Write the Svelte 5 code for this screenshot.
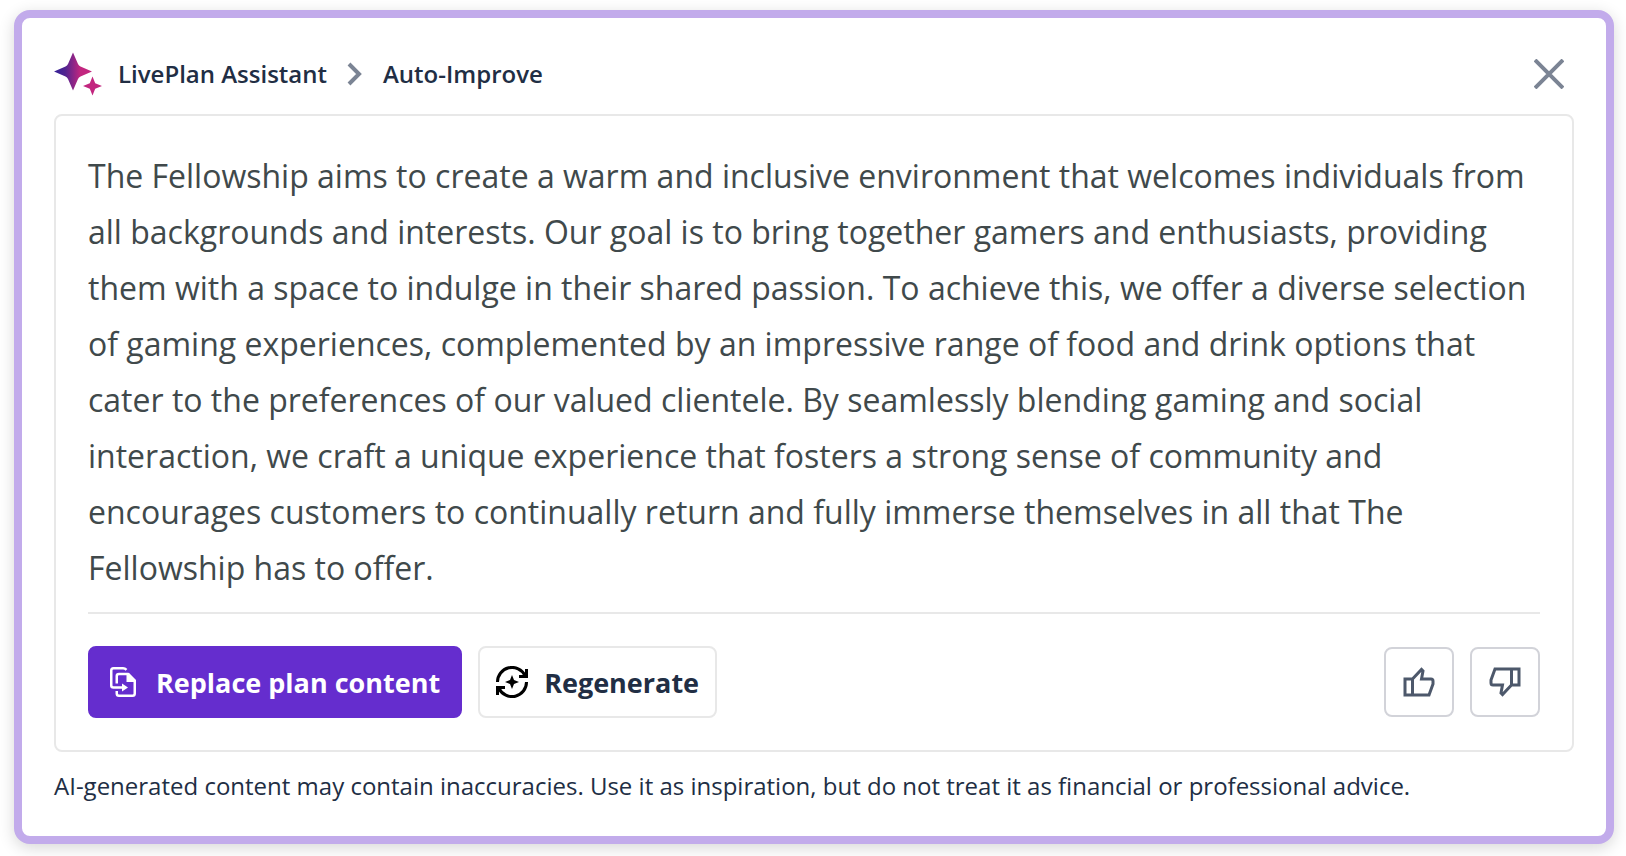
<script lang="ts">
  interface Props {
    action?: string;
    content?: string;
  }

  let {
    action = 'Auto-Improve',
    content = 'The Fellowship aims to create a warm and inclusive environment that welcomes individuals from all backgrounds and interests. Our goal is to bring together gamers and enthusiasts, providing them with a space to indulge in their shared passion. To achieve this, we offer a diverse selection of gaming experiences, complemented by an impressive range of food and drink options that cater to the preferences of our valued clientele. By seamlessly blending gaming and social interaction, we craft a unique experience that fosters a strong sense of community and encourages customers to continually return and fully immerse themselves in all that The Fellowship has to offer.',
  }: Props = $props();
</script>

<section class="assistant" aria-label="LivePlan Assistant">
  <header class="header">
    <svg class="logo" width="48" height="44" viewBox="0 0 48 44" aria-hidden="true">
      <defs>
        <linearGradient id="spark" x1="0" y1="0" x2="1" y2="0">
          <stop offset="0.1" stop-color="#3c2396" />
          <stop offset="0.3" stop-color="#52248f" />
          <stop offset="0.7" stop-color="#c2267f" />
        </linearGradient>
      </defs>
      <path
        fill="url(#spark)"
        d="M19 0.500 24 12Q24.800 13.700 26.500 14.500L38 19.500 26.500 24.500Q24.800 25.300 24 27L19 38.500 14 27Q13.200 25.300 11.500 24.500L0 19.500 11.500 14.500Q13.200 13.700 14 12Z"
      />
      <path fill="#c2267f" d="m38.500 24.500 2.700 6.800 6.800 2.700-6.800 2.700-2.700 6.800-2.700-6.800L29 34l6.800-2.700Z" />
    </svg>
    <nav class="crumbs" aria-label="Breadcrumb">
      <span>LivePlan Assistant</span>
      <svg width="16" height="24" viewBox="0 0 16 24" fill="none" stroke="#7b8494" stroke-width="4" aria-hidden="true">
        <path d="m2 2 10 10L2 22" />
      </svg>
      <span>{action}</span>
    </nav>
    <button class="close" type="button" aria-label="Close">
      <svg width="30" height="30" viewBox="0 0 30 30" fill="none" stroke="currentColor" stroke-width="4" aria-hidden="true">
        <path d="m1 1 28 28M29 1 1 29" />
      </svg>
    </button>
  </header>

  <div class="result">
    <p class="content">{content}</p>
    <div class="actions">
      <button class="btn primary" type="button">
        <svg width="26" height="30" viewBox="0 0 26 30" fill="none" stroke="currentColor" stroke-width="2.500" aria-hidden="true">
          <path d="M16.500 2.800Q15 1.250 13 1.250H3.500Q1.250 1.250 1.250 3.500V18.500Q1.250 20.500 3.500 20.500H14" />
          <path d="M6.750 16.500V9Q6.750 7 9 7H18L24.750 14V26.500Q24.750 28.750 22.500 28.750H9Q6.750 28.750 6.750 26.500V24" />
          <path fill="currentColor" stroke="none" d="M16.500 6H19L26 13V15H16.500ZM12 16.500 18 20.500l-6 4Z" />
        </svg>
        Replace plan content
      </button>
      <button class="btn" type="button">
        <svg width="32" height="32" viewBox="0 0 32 32" fill="none" stroke="#000" stroke-width="3" aria-hidden="true">
          <path d="M1.500 16A14.500 14.500 0 0 1 29 9.500M30.500 16A14.500 14.500 0 0 1 3 22.500" />
          <path d="M30.500 3v7.500H23M1.500 29v-7.500H9" />
          <path fill="#000" stroke="none" d="m16 9 2 5 5 2-5 2-2 5-2-5-5-2 5-2Z" />
        </svg>
        Regenerate
      </button>
      <div class="feedback">
        <button class="vote" type="button" aria-label="Good response">
          <svg width="32" height="30" viewBox="0 0 32 30" fill="none" stroke="currentColor" stroke-width="3" aria-hidden="true">
            <path d="M2 12H9.500V28H2ZM9.500 12 18.500 2.500 20 4 18.500 12H28Q30 12 30 14V17L26 28H9.500" />
          </svg>
        </button>
        <button class="vote" type="button" aria-label="Bad response">
          <svg width="32" height="30" viewBox="0 0 32 30" fill="none" stroke="currentColor" stroke-width="3" aria-hidden="true">
            <path d="M30 18H22.500V2H30ZM22.500 18 13.500 27.500 12 26 13.500 18H4Q2 18 2 16V13L6 2H22.500" />
          </svg>
        </button>
      </div>
    </div>
  </div>

  <p class="disclaimer">
    AI-generated content may contain inaccuracies. Use it as inspiration, but do not treat it as financial or
    professional advice.
  </p>
</section>

<style>
  :global(body) {
    background: #fff;
  }

  .assistant {
    margin: 10px 12px 12px 14px;
    padding: 0 32px 34px;
    border: 8px solid #c2abeb;
    border-radius: 16px;
    background: #fff;
    box-shadow: 0 4px 16px rgb(0 0 0 / 16%);
    color: #212e44;
    font-family: 'Open Sans', 'Noto Sans', sans-serif;
  }

  .header {
    display: flex;
    align-items: center;
    height: 96px;
    padding: 16px 10px 0 0;
    box-sizing: border-box;
  }

  .crumbs {
    display: flex;
    align-items: center;
    gap: 20px;
    margin-left: 16px;
    font-size: 24px;
    font-weight: 600;
    line-height: 32px;
  }

  .close {
    display: flex;
    margin-left: auto;
    padding: 0;
    border: 0;
    background: none;
    color: #7b8494;
    cursor: pointer;
  }

  .result {
    padding: 32px;
    border: 2px solid #e8e8e8;
    border-radius: 8px;
  }

  .content {
    margin: 0;
    padding-bottom: 16px;
    border-bottom: 2px solid #e8e8e8;
    color: #40494b;
    font-size: 32px;
    font-weight: 500;
    line-height: 56px;
  }

  .actions {
    display: flex;
    align-items: center;
    gap: 16px;
    margin-top: 32px;
  }

  .btn {
    display: flex;
    align-items: center;
    gap: 16px;
    height: 72px;
    padding: 0 16px;
    border: 2px solid #e8e8e8;
    border-radius: 8px;
    background: #fff;
    color: #212e44;
    font: inherit;
    font-size: 27px;
    font-weight: 700;
    cursor: pointer;
  }

  .primary {
    gap: 20px;
    padding: 0 20px;
    border-color: #652dce;
    background: #652dce;
    color: #fff;
  }

  .feedback {
    display: flex;
    gap: 16px;
    margin-left: auto;
  }

  .vote {
    display: flex;
    align-items: center;
    justify-content: center;
    width: 70px;
    height: 70px;
    padding: 0;
    border: 2px solid #d2d3d9;
    border-radius: 8px;
    background: #fff;
    color: #4d586b;
    cursor: pointer;
  }

  .disclaimer {
    margin: 18px 0 0;
    font-size: 24px;
    font-weight: 500;
    line-height: 32px;
  }
</style>
